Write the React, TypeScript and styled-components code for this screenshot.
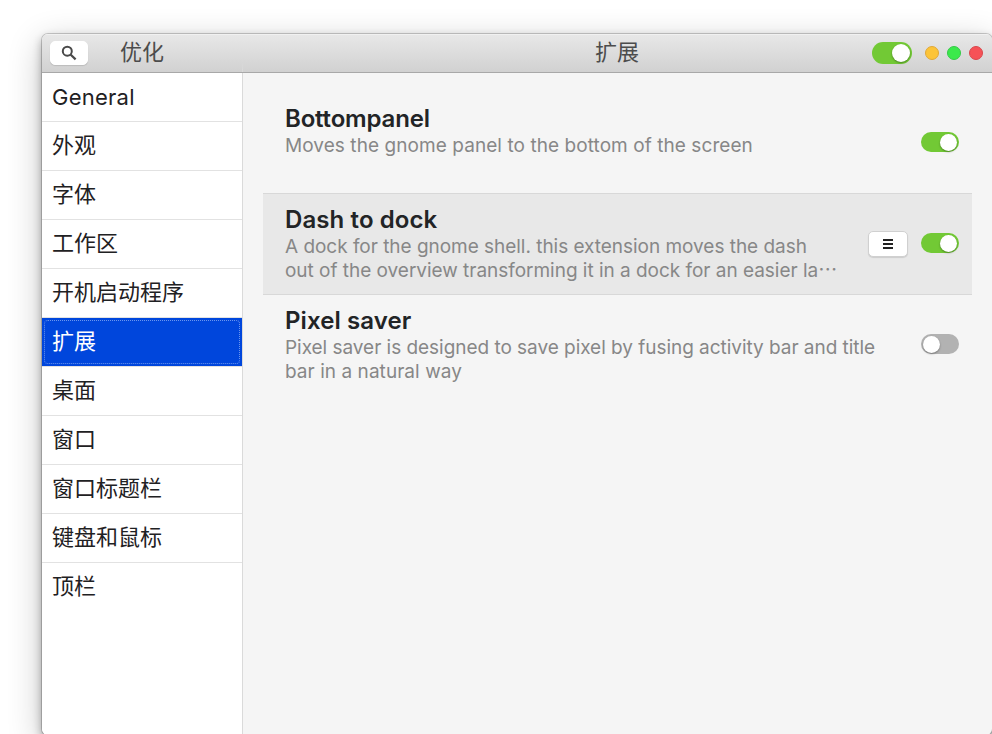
import React from "react";
import styled, { createGlobalStyle } from "styled-components";

const GlobalStyle = createGlobalStyle`
  * { box-sizing: border-box; }
  html, body { margin: 0; height: 734px; overflow: hidden; background: #fff; }
  body { font-family: Inter, "Noto Sans CJK SC", sans-serif; color: #222426; }
`;

const Stage = styled.div`
  width: 992px;
  height: 734px;
  padding: 34px 0 0 42px;
  overflow: hidden;
`;

const Window = styled.div`
  width: 950px;
  height: 701px;
  display: flex;
  flex-direction: column;
  border-radius: 6px;
  background: #f5f5f5;
  box-shadow: 0 0 0 1px rgba(0, 0, 0, 0.18), 0 4px 10px rgba(0, 0, 0, 0.32), 0 9px 34px rgba(0, 0, 0, 0.24);
  overflow: hidden;
`;

const HeaderBar = styled.header`
  flex: none;
  height: 39px;
  display: flex;
  align-items: center;
  background: linear-gradient(#e8e8e8, #d1d1d1);
  border-bottom: 1px solid #a8a8a8;
  box-shadow: inset 0 1px #f1f1f1;
`;

const HeaderSide = styled.div`
  width: 201px;
  height: 100%;
  display: flex;
  align-items: center;
  padding-left: 8px;
  border-right: 1px solid #d5d5d5;
  border-image: linear-gradient(transparent 70%, #dcdcdc) 1;
`;

const HeaderMain = styled.div`
  flex: 1;
  display: flex;
  align-items: center;
  padding-right: 9px;
`;

const Title = styled.span<{ $gap: number }>`
  margin-left: ${(p) => p.$gap}px;
  font-size: 22px;
  line-height: 36px;
  height: 38px;
  color: #4c4c4c;
`;

const Button = styled.button<{ $w: number; $h: number; $border: string }>`
  flex: none;
  width: ${(p) => p.$w}px;
  height: ${(p) => p.$h}px;
  padding: 0;
  display: flex;
  align-items: center;
  justify-content: center;
  background: #fff;
  border: 1px solid ${(p) => p.$border};
  border-radius: 5px;
  box-shadow: 0 1px 1px rgba(0, 0, 0, 0.12);
`;

const Switch = styled.span<{ $on: boolean; $large?: boolean }>`
  flex: none;
  width: ${(p) => (p.$large ? 40 : 38)}px;
  height: ${(p) => (p.$large ? 22 : 20)}px;
  padding: 0 2px;
  display: flex;
  align-items: center;
  justify-content: ${(p) => (p.$on ? "flex-end" : "flex-start")};
  border-radius: 11px;
  background: ${(p) => (p.$on ? "#72c935" : "#b2b2b2")};
`;

const Knob = styled.span<{ $size: number }>`
  width: ${(p) => p.$size}px;
  height: ${(p) => p.$size}px;
  border-radius: 50%;
  background: #fff;
  box-shadow: 0 1px 2px rgba(0, 0, 0, 0.35);
`;

const WindowControls = styled.div`
  display: flex;
  gap: 8px;
  margin-left: 13px;
`;

const Dot = styled.span<{ $fill: string; $edge: string }>`
  width: 14px;
  height: 14px;
  border-radius: 50%;
  background: ${(p) => p.$fill};
  border: 1px solid ${(p) => p.$edge};
`;

const Spacer = styled.span`
  flex: 1;
`;

const Body = styled.div`
  flex: 1;
  display: flex;
`;

const Sidebar = styled.nav`
  width: 201px;
  background: #fff;
  border-right: 1px solid #dadada;
`;

const NavItem = styled.div<{ $active: boolean; $last: boolean }>`
  height: 49px;
  padding: 2px;
  background: ${(p) => (p.$active ? "#0046dc" : "#fff")};
  background-clip: padding-box;
  border-bottom: 1px solid ${(p) => (p.$last ? "transparent" : "#e2e2e2")};
  color: ${(p) => (p.$active ? "#fff" : "#1f2123")};
`;

const NavLabel = styled.div<{ $active: boolean; $latin: boolean }>`
  height: 44px;
  padding-left: 7px;
  border: 1px dotted ${(p) => (p.$active ? "#6c96ee" : "transparent")};
  border-radius: 4px;
  font-size: 22px;
  line-height: ${(p) => (p.$latin ? 42 : 40)}px;
  letter-spacing: ${(p) => (p.$latin ? 0.25 : 0)}px;
  white-space: nowrap;
`;

const Content = styled.main`
  flex: 1;
  padding: 20px 20px 0;
`;

const Extension = styled.section<{ $shaded: boolean }>`
  height: ${(p) => (p.$shaded ? 102 : 100)}px;
  display: flex;
  align-items: center;
  padding: 0 13px 0 22px;
  background: ${(p) => (p.$shaded ? "#e8e8e8" : "transparent")};
  border: solid #d8d8d8;
  border-width: ${(p) => (p.$shaded ? "1px 0" : "0")};
`;

const Text = styled.div`
  flex: 1;
  height: 100%;
  padding-top: 11px;
`;

const Name = styled.h2<{ $spacing: number }>`
  margin: 0;
  height: 30px;
  line-height: 30px;
  font-size: 24px;
  font-weight: 600;
  letter-spacing: ${(p) => p.$spacing}px;
`;

const Line = styled.div<{ $spacing: number }>`
  height: 24px;
  line-height: 24px;
  font-size: 19px;
  color: #878787;
  letter-spacing: ${(p) => p.$spacing}px;
  white-space: nowrap;
`;

const Ellipsis = styled.span`
  font-family: "Noto Sans CJK SC", sans-serif;
  line-height: 1;
`;

const Actions = styled.div`
  display: flex;
  align-items: flex-start;
  gap: 13px;
  height: 20px;
  margin-top: -2px;
`;

type ExtensionInfo = {
  name: string;
  nameSpacing: number;
  lines: [string, number][];
  truncated?: boolean;
  on: boolean;
  menu?: boolean;
};

const MenuButton = styled(Button)`
  margin-top: -2px;
`;

const categories = ["General", "外观", "字体", "工作区", "开机启动程序", "扩展", "桌面", "窗口", "窗口标题栏", "键盘和鼠标", "顶栏"];

const extensions: ExtensionInfo[] = [
  {
    name: "Bottompanel",
    nameSpacing: -0.18,
    lines: [["Moves the gnome panel to the bottom of the screen", 0.07]],
    on: true,
  },
  {
    name: "Dash to dock",
    nameSpacing: 0.1,
    lines: [
      ["A dock for the gnome shell. this extension moves the dash", -0.03],
      ["out of the overview transforming it in a dock for an easier la", -0.025],
    ],
    truncated: true,
    on: true,
    menu: true,
  },
  {
    name: "Pixel saver",
    nameSpacing: 0.1,
    lines: [
      ["Pixel saver is designed to save pixel by fusing activity bar and title", -0.035],
      ["bar in a natural way", 0.05],
    ],
    on: false,
  },
];

function SearchIcon() {
  return (
    <svg width="16" height="16" viewBox="0 0 16 16" fill="none" stroke="#4a4a4a">
      <circle cx="6.3" cy="6.2" r="4.5" strokeWidth="2" />
      <path d="M9.5 9.5 14.6 14.4" strokeWidth="2.2" />
    </svg>
  );
}

function MenuIcon() {
  return (
    <svg width="10" height="10" viewBox="0 0 10 10" fill="#222">
      <path d="M0 0h10v2H0zM0 4h10v2H0zM0 8h10v2H0z" />
    </svg>
  );
}

export default function App() {
  return (
    <>
      <GlobalStyle />
      <Stage>
        <Window>
          <HeaderBar>
            <HeaderSide>
              <Button $w={38} $h={24} $border="#fff" aria-label="Search">
                <SearchIcon />
              </Button>
              <Title $gap={32}>优化</Title>
            </HeaderSide>
            <HeaderMain>
              <Title $gap={352}>扩展</Title>
              <Spacer />
              <Switch $on $large>
                <Knob $size={18} />
              </Switch>
              <WindowControls>
                <Dot $fill="#fcc438" $edge="#e0a838" />
                <Dot $fill="#3be94b" $edge="#35c948" />
                <Dot $fill="#f65257" $edge="#d9474c" />
              </WindowControls>
            </HeaderMain>
          </HeaderBar>
          <Body>
            <Sidebar>
              {categories.map((label, i) => (
                <NavItem key={label} $active={label === "扩展"} $last={i === categories.length - 1}>
                  <NavLabel $active={label === "扩展"} $latin={/^[A-Za-z]/.test(label)}>
                    {label}
                  </NavLabel>
                </NavItem>
              ))}
            </Sidebar>
            <Content>
              {extensions.map((ext) => (
                <Extension key={ext.name} $shaded={!!ext.menu}>
                  <Text>
                    <Name $spacing={ext.nameSpacing}>{ext.name}</Name>
                    {ext.lines.map(([text, spacing], i) => (
                      <Line key={text} $spacing={spacing}>
                        {text}
                        {ext.truncated && i === ext.lines.length - 1 && <Ellipsis lang="zh-CN">…</Ellipsis>}
                      </Line>
                    ))}
                  </Text>
                  <Actions>
                    {ext.menu && (
                      <MenuButton $w={40} $h={26} $border="#d0d0d0" aria-label="Settings">
                        <MenuIcon />
                      </MenuButton>
                    )}
                    <Switch $on={ext.on}>
                      <Knob $size={17} />
                    </Switch>
                  </Actions>
                </Extension>
              ))}
            </Content>
          </Body>
        </Window>
      </Stage>
    </>
  );
}
